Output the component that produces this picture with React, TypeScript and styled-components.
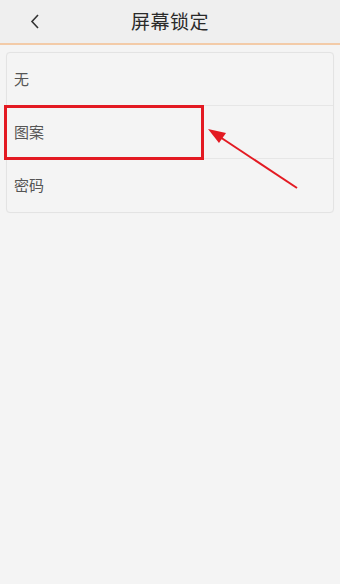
import React from "react";
import styled, { createGlobalStyle } from "styled-components";

const Global = createGlobalStyle`
  html, body { margin: 0; padding: 0; background: #f4f4f4; }
  body { font-family: "Noto Sans CJK SC", "Noto Sans", sans-serif; }
`;

const Page = styled.div`
  width: 340px;
  height: 584px;
  background: #f4f4f4;
  position: relative;
  overflow: hidden;
`;

const Header = styled.div`
  height: 43px;
  background: #efefef;
  border-bottom: 2px solid #f3cba8;
  display: flex;
  align-items: center;
  justify-content: center;
  position: relative;
`;

const Back = styled.div`
  position: absolute;
  left: 28px;
  top: 12px;
  width: 16px;
  height: 20px;
  display: flex;
`;

const Title = styled.div`
  font-size: 19px;
  color: #2a2a2a;
  letter-spacing: 0.5px;
  margin-top: -2px;
`;

const Card = styled.div`
  margin: 7px 6px 0 6px;
  border: 1px solid #e3e3e3;
  border-radius: 4px;
  background: #f4f4f4;
  box-shadow: 0 0 1px rgba(0,0,0,0.04);
`;

const Row = styled.div<{ $last?: boolean }>`
  height: 53px;
  display: flex;
  align-items: center;
  padding-left: 7px;
  padding-bottom: 2px;
  box-sizing: border-box;
  font-size: 15px;
  color: #555;
  border-bottom: ${(p) => (p.$last ? "none" : "1px solid #e6e6e6")};
`;

const Highlight = styled.div`
  position: absolute;
  left: 4px;
  top: 105px;
  width: 194px;
  height: 49px;
  border: 3px solid #e31a22;
`;

const Arrow = styled.svg`
  position: absolute;
  left: 0;
  top: 0;
`;

export default function App() {
  return (
    <Page>
      <Global />
      <Header>
        <Back>
          <svg width="16" height="20" viewBox="0 0 16 20">
            <path d="M10 3 L4 9.5 L10 16" fill="none" stroke="#333" strokeWidth="1.6" />
          </svg>
        </Back>
        <Title>屏幕锁定</Title>
      </Header>
      <Card>
        <Row>无</Row>
        <Row>图案</Row>
        <Row $last>密码</Row>
      </Card>
      <Highlight />
      <Arrow width="340" height="584" viewBox="0 0 340 584">
        <line x1="297" y1="188" x2="220" y2="137" stroke="#e31a22" strokeWidth="2" />
        <polygon points="208,129 226,133 219,143" fill="#e31a22" />
      </Arrow>
    </Page>
  );
}
